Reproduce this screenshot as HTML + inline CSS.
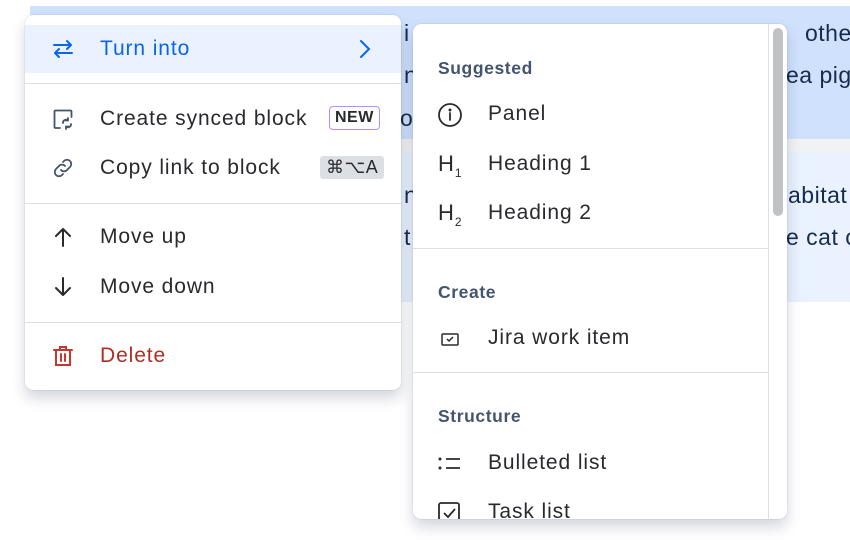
<!DOCTYPE html>
<html><head><style>
body{margin:0;width:850px;height:547px;background:#fff;position:relative;overflow:hidden;font-family:"Liberation Sans",sans-serif;}
.abs{position:absolute}
.bgt{position:absolute;font-size:23px;color:#172b4d;white-space:nowrap;letter-spacing:.5px}
.menu{position:absolute;background:#fff;border-radius:8px;box-shadow:0 8px 14px rgba(9,30,66,.18),0 0 1px rgba(9,30,66,.3);overflow:hidden}
.row{position:absolute;left:0;right:0;height:48px;font-size:21px;letter-spacing:.9px;color:#292a2e;line-height:48px}
.row .t{position:absolute;left:75px}
.row svg{position:absolute;left:26px;top:12px}
.div{position:absolute;left:0;right:0;height:1px;background:#dcdfe4}
.h{position:absolute;left:25px;font-size:17.5px;letter-spacing:.6px;font-weight:bold;color:#44546f}
.it{position:absolute;left:0;width:355px;height:48px;line-height:48px;font-size:21px;letter-spacing:.9px;color:#292a2e}
.it .t{position:absolute;left:75px}
.it svg{position:absolute;left:24px;top:12px}
.hh{position:absolute;left:25px;top:0;font-size:22px;color:#292a2e;letter-spacing:0}
.hh small{font-size:12px;position:relative;top:6px;left:1px}
</style></head><body>
<div class="abs" style="left:30px;top:6px;width:820px;height:133px;background:#cfe1fd"></div>
<div class="abs" style="left:30px;top:139px;width:820px;height:13px;background:#f1f2f4"></div>
<div class="abs" style="left:30px;top:152px;width:820px;height:150px;background:#e9f2fe"></div>
<div class="bgt" style="left:404px;top:20px">i</div>
<div class="bgt" style="left:404px;top:62px">n</div>
<div class="bgt" style="left:400px;top:105px">or</div>
<div class="bgt" style="left:404px;top:182px">n</div>
<div class="bgt" style="left:404px;top:224px">t</div>
<div class="bgt" style="left:805px;top:20px">other</div>
<div class="bgt" style="left:786px;top:62px">ea pig</div>
<div class="bgt" style="left:788px;top:182px">abitat</div>
<div class="bgt" style="left:786px;top:224px">e cat c</div>

<div class="menu" style="left:25px;top:15px;width:376px;height:375px">
 <div class="row" style="top:10px;background:#e9f2fe;color:#0c66e4">
  <svg width="24" height="24" viewBox="0 0 24 24" fill="none" stroke="#0c66e4" stroke-width="2" stroke-linecap="round" stroke-linejoin="round"><path d="M3 8h17M16 4l4 4-4 4M21 16H4M8 12l-4 4 4 4"/></svg>
  <span class="t">Turn into</span>
  <svg style="left:330px" width="20" height="24" viewBox="0 0 20 24" fill="none" stroke="#0c66e4" stroke-width="2" stroke-linecap="round"><path d="M6 4l8 8-8 8"/></svg>
 </div>
 <div class="div" style="top:68px"></div>
 <div class="row" style="top:80px">
  <svg width="24" height="24" viewBox="0 0 24 24" fill="none" stroke="#44546f" stroke-width="1.8" stroke-linecap="round" stroke-linejoin="round"><path d="M9 21H4.5a1 1 0 0 1-1-1V4.5a1 1 0 0 1 1-1h15a1 1 0 0 1 1 1V10"/><path d="M12 16a3 3 0 0 1 5-2.5M20 17a3 3 0 0 1-5 2.5M17 11v2.5h-2.5M15 22v-2.5h2.5"/></svg>
  <span class="t">Create synced block</span>
  <span class="abs" style="left:304px;top:11px;height:22px;line-height:22px;padding:0 5px;border:1.5px solid #b88cf2;border-radius:4px;font-size:16px;font-weight:bold;color:#292a2e;letter-spacing:.5px">NEW</span>
 </div>
 <div class="row" style="top:129px">
  <svg width="24" height="24" viewBox="0 0 24 24" fill="none" stroke="#44546f" stroke-width="1.8" stroke-linecap="round"><path d="M10 14a4 4 0 0 0 6 0l3-3a4 4 0 0 0-6-6l-1 1"/><path d="M14 10a4 4 0 0 0-6 0l-3 3a4 4 0 0 0 6 6l1-1"/></svg>
  <span class="t">Copy link to block</span>
  <span class="abs" style="left:295px;top:12px;height:23px;line-height:23px;padding:0 6px;background:#dcdfe4;border-radius:3px;font-size:18px;color:#292a2e;letter-spacing:.5px">⌘⌥A</span>
 </div>
 <div class="div" style="top:188px"></div>
 <div class="row" style="top:198px">
  <svg width="24" height="24" viewBox="0 0 24 24" fill="none" stroke="#292a2e" stroke-width="2" stroke-linecap="round" stroke-linejoin="round"><path d="M12 21V4M5 11l7-7 7 7"/></svg>
  <span class="t">Move up</span>
 </div>
 <div class="row" style="top:248px">
  <svg width="24" height="24" viewBox="0 0 24 24" fill="none" stroke="#292a2e" stroke-width="2" stroke-linecap="round" stroke-linejoin="round"><path d="M12 3v17M5 13l7 7 7-7"/></svg>
  <span class="t">Move down</span>
 </div>
 <div class="div" style="top:307px"></div>
 <div class="row" style="top:317px;color:#ae2e24">
  <svg width="24" height="24" viewBox="0 0 24 24" fill="none" stroke="#c9372c" stroke-width="2" stroke-linecap="round"><path d="M3 6h18M9 6V3h6v3M5 6v15h14V6M10 10v7M14 10v7"/></svg>
  <span class="t">Delete</span>
 </div>
</div>

<div class="menu" style="left:413px;top:24px;width:374px;height:495px">
 <div class="abs" style="left:355px;top:0;width:1px;height:495px;background:#dcdfe4"></div>
 <div class="abs" style="left:360px;top:4px;width:10px;height:188px;background:#c1c2c4;border-radius:5px"></div>
 <div class="h" style="top:34px">Suggested</div>
 <div class="it" style="top:66px"><svg width="26" height="26" viewBox="0 0 26 26" fill="none" stroke="#292a2e" stroke-width="1.8"><circle cx="13" cy="13" r="11"/><path d="M13 11v7" stroke-linecap="round"/><circle cx="13" cy="8" r="0.6" fill="#292a2e"/></svg><span class="t">Panel</span></div>
 <div class="it" style="top:116px"><span class="hh">H<small>1</small></span><span class="t">Heading 1</span></div>
 <div class="it" style="top:165px"><span class="hh">H<small>2</small></span><span class="t">Heading 2</span></div>
 <div class="div" style="top:224px;right:19px"></div>
 <div class="h" style="top:258px">Create</div>
 <div class="it" style="top:290px"><svg width="26" height="26" viewBox="0 0 26 26" fill="none" stroke="#292a2e" stroke-width="1.5"><rect x="5" y="8" width="16" height="11" rx="1"/><path d="M10 13l2 2 4-4"/></svg><span class="t">Jira work item</span></div>
 <div class="div" style="top:348px;right:19px"></div>
 <div class="h" style="top:382px">Structure</div>
 <div class="it" style="top:415px"><svg width="26" height="26" viewBox="0 0 26 26" fill="#292a2e" stroke="#292a2e" stroke-width="1.8"><circle cx="3" cy="8" r="1.5" stroke="none"/><circle cx="3" cy="17" r="1.5" stroke="none"/><path d="M9 8h14M9 17h14"/></svg><span class="t">Bulleted list</span></div>
 <div class="it" style="top:464px"><svg width="26" height="26" viewBox="0 0 26 26" fill="none" stroke="#292a2e" stroke-width="1.8"><rect x="2" y="3" width="20" height="20" rx="2"/><path d="M7 13l4 4 7-8"/></svg><span class="t">Task list</span></div>
</div>
</body></html>
